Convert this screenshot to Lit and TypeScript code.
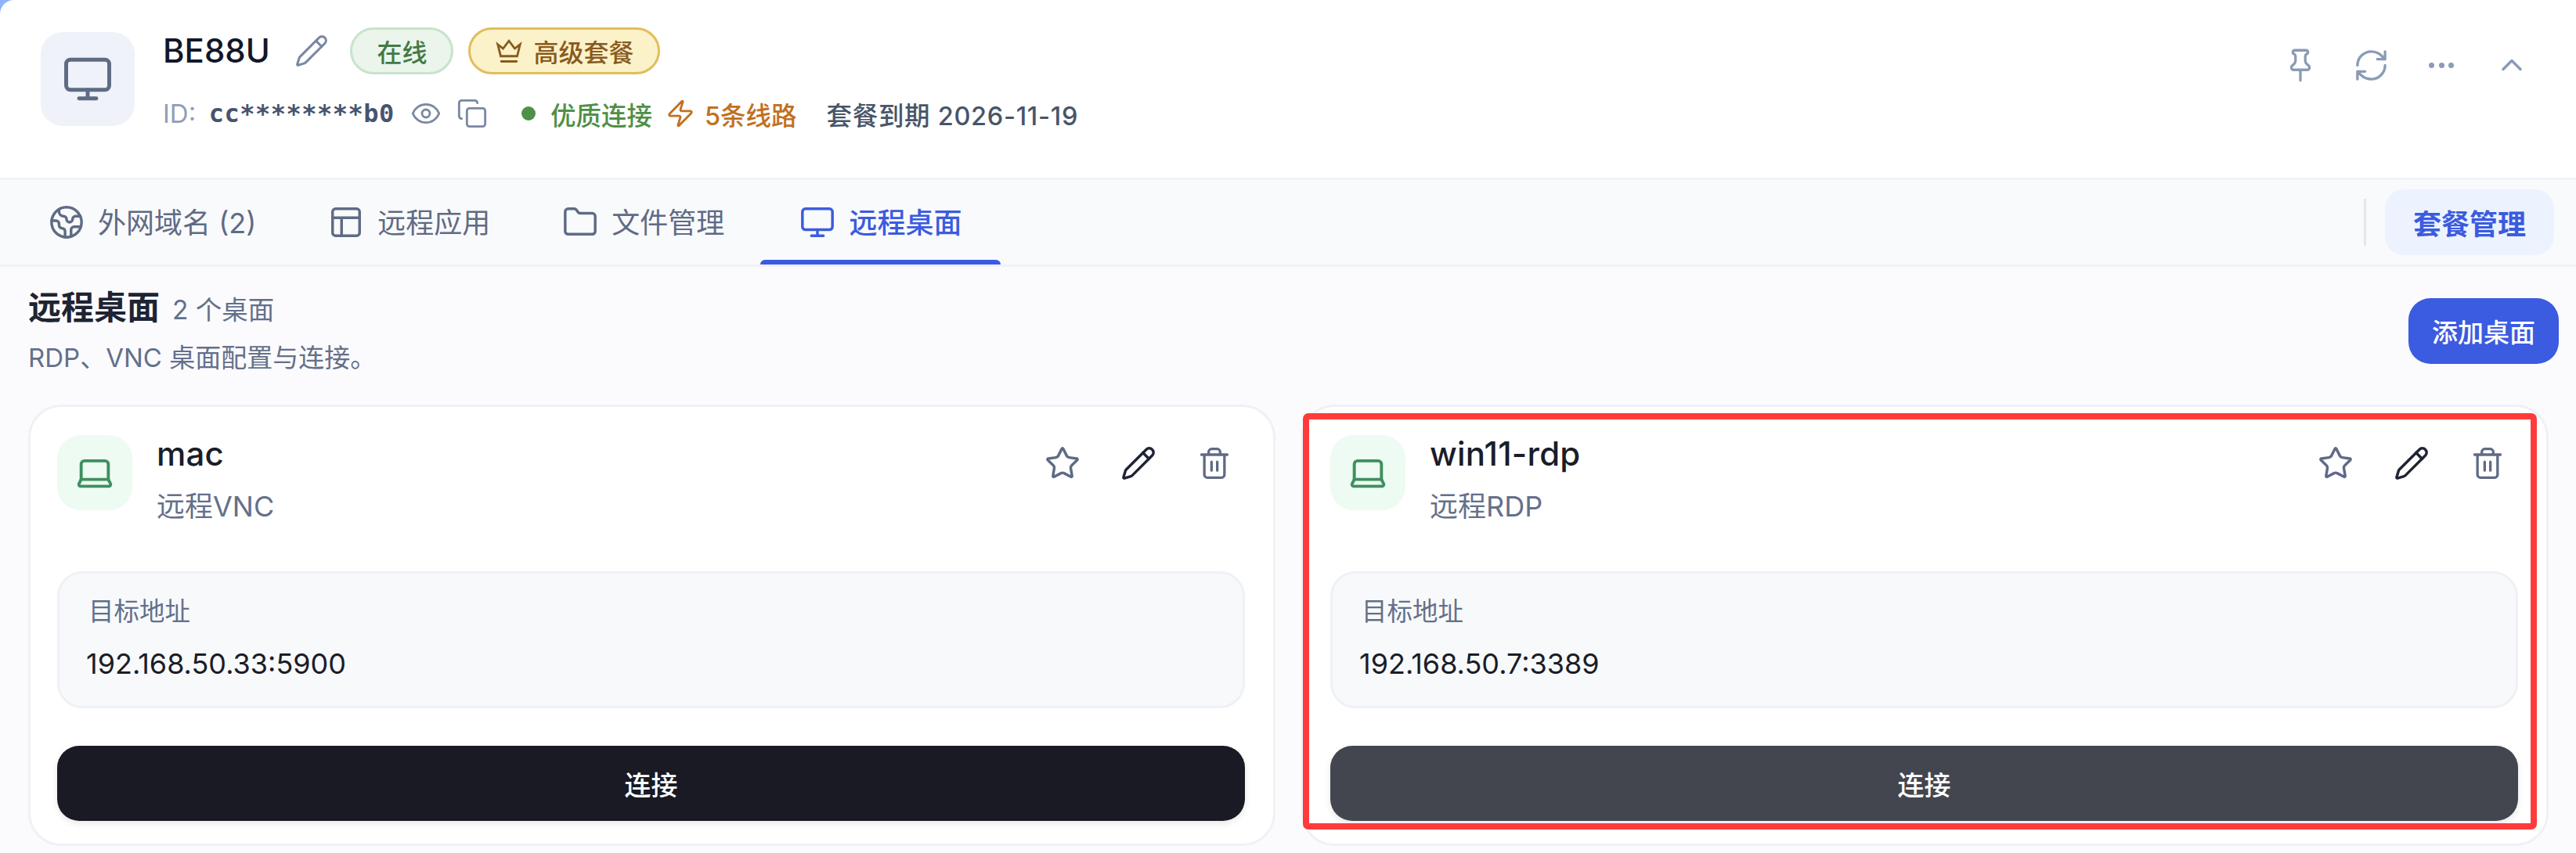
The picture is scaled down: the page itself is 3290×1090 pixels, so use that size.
import { LitElement, html, css, svg } from "lit";
import { customElement } from "lit/decorators.js";

const I = {
  monitor: svg`<rect x="2" y="3" width="20" height="14" rx="2"/><path d="M8 21h8M12 17v4"/>`,
  pencil: svg`<path d="M21.174 6.812a1 1 0 0 0-3.986-3.987L3.842 16.174a2 2 0 0 0-.5.83l-1.321 4.352a.5.5 0 0 0 .623.622l4.353-1.32a2 2 0 0 0 .83-.497z"/><path d="m15 5 4 4"/>`,
  eye: svg`<path d="M2.062 12.348a1 1 0 0 1 0-.696 10.75 10.75 0 0 1 19.876 0 1 1 0 0 1 0 .696 10.75 10.75 0 0 1-19.876 0"/><circle cx="12" cy="12" r="3"/>`,
  copy: svg`<rect x="8" y="8" width="14" height="14" rx="2"/><path d="M4 16c-1.1 0-2-.9-2-2V4c0-1.1.9-2 2-2h10c1.1 0 2 .9 2 2"/>`,
  zap: svg`<path d="M4 14a1 1 0 0 1-.78-1.63l9.9-10.2a.5.5 0 0 1 .86.46l-1.92 6.02A1 1 0 0 0 13 10h7a1 1 0 0 1 .78 1.63l-9.9 10.2a.5.5 0 0 1-.86-.46l1.92-6.02A1 1 0 0 0 11 14z"/>`,
  crown: svg`<path d="M2.5 6.5 7 10l5-6.5L17 10l4.5-3.5L19 16.5H5z"/><path d="M5.5 21h13"/>`,
  earth: svg`<path d="M21.54 15H17a2 2 0 0 0-2 2v4.54"/><path d="M7 3.34V5a3 3 0 0 0 3 3a2 2 0 0 1 2 2c0 1.1.9 2 2 2a2 2 0 0 0 2-2c0-1.1.9-2 2-2h3.17"/><path d="M11 21.95V18a2 2 0 0 0-2-2a2 2 0 0 1-2-2v-1a2 2 0 0 0-2-2H2.05"/><circle cx="12" cy="12" r="10"/>`,
  layout: svg`<rect x="3" y="3" width="18" height="18" rx="2"/><path d="M3 9h18M9 21V9"/>`,
  folder: svg`<path d="M20 20a2 2 0 0 0 2-2V8a2 2 0 0 0-2-2h-7.9a2 2 0 0 1-1.69-.9L9.6 3.9A2 2 0 0 0 7.93 3H4a2 2 0 0 0-2 2v13a2 2 0 0 0 2 2Z"/>`,
  star: svg`<path d="M11.525 2.295a.53.53 0 0 1 .95 0l2.31 4.679a2.123 2.123 0 0 0 1.595 1.16l5.166.756a.53.53 0 0 1 .294.904l-3.736 3.638a2.123 2.123 0 0 0-.611 1.878l.882 5.14a.53.53 0 0 1-.771.56l-4.618-2.428a2.122 2.122 0 0 0-1.973 0L6.396 21.01a.53.53 0 0 1-.77-.56l.881-5.139a2.122 2.122 0 0 0-.611-1.879L2.16 9.795a.53.53 0 0 1 .294-.906l5.165-.755a2.122 2.122 0 0 0 1.597-1.16z"/>`,
  trash: svg`<path d="M3 6h18M19 6v14c0 1-1 2-2 2H7c-1 0-2-1-2-2V6M8 6V4c0-1 1-2 2-2h4c1 0 2 1 2 2v2M10 11v6M14 11v6"/>`,
  laptop: svg`<path d="M18 5a2 2 0 0 1 2 2v8.526a2 2 0 0 0 .212.897l1.068 2.127a1 1 0 0 1-.9 1.45H3.62a1 1 0 0 1-.9-1.45l1.068-2.127A2 2 0 0 0 4 15.526V7a2 2 0 0 1 2-2z"/><path d="M20.054 15.987H3.946"/>`,
  pin: svg`<path d="M8.5 3h7a1.2 1.2 0 0 1 .4 2.3c-.6.3-.9.8-.9 1.4v2.8c0 1 .5 1.6 1.2 2.2l1 .9c.8.8.3 2.4-1 2.4H7.8c-1.3 0-1.8-1.6-1-2.4l1-.9c.7-.6 1.2-1.2 1.2-2.2V6.7c0-.6-.3-1.1-.9-1.4A1.2 1.2 0 0 1 8.5 3zM12 15v6.5"/>`,
  refresh: svg`<path d="M3 12a9 9 0 0 1 9-9 9.75 9.75 0 0 1 6.74 2.74L21 8M21 3v5h-5M21 12a9 9 0 0 1-9 9 9.75 9.75 0 0 1-6.74-2.74L3 16M8 16H3v5"/>`,
  chevron: svg`<path d="m6 15 6-6 6 6"/>`,
};

const icon = (p: unknown, cls: string) =>
  html`<svg class="ic ${cls}" viewBox="0 0 24 24" fill="none" stroke="currentColor" stroke-linecap="round" stroke-linejoin="round">${p}</svg>`;

const desktops = [
  { name: "mac", kind: "远程VNC", addr: "192.168.50.33:5900", hover: false },
  { name: "win11-rdp", kind: "远程RDP", addr: "192.168.50.7:3389", hover: true },
];

@customElement("app-root")
export class AppRoot extends LitElement {
  static styles = css`
    :host {
      display: block;
      position: relative;
      width: 3290px;
      height: 1090px;
      overflow: hidden;
      background: #8fb3ff;
      font-family: Inter, "Noto Sans CJK SC", sans-serif;
      color: #1a1d29;
    }
    * { box-sizing: border-box; }
    .ic { display: block; flex: none; stroke-width: 2; }

    .header {
      height: 230px;
      background: #fff;
      border-bottom: 3px solid #eff2f7;
      border-top-left-radius: 18px;
      display: flex;
      align-items: flex-start;
      padding-left: 52px;
    }
    .tile {
      width: 120px; height: 120px; margin-top: 41px;
      border-radius: 28px;
      background: #eff2f8;
      color: #5f6b85;
      display: flex; align-items: center; justify-content: center;
    }
    .ic-tile { width: 66px; height: 66px; stroke-width: 1.8; }
    .info { margin-left: 36px; padding-top: 35px; display: flex; flex-direction: column; }
    .title-row { display: flex; align-items: center; height: 60px; }
    .title { font-size: 42px; font-weight: 500; color: #12172a; line-height: 60px; }
    .ic-edit { width: 44px; height: 44px; margin-left: 31.5px; margin-right: 27px; color: #7a88a3; stroke-width: 1.7; }
    .badge {
      height: 60px; border-radius: 30px; border-width: 3px; border-style: solid;
      display: flex; align-items: center; padding: 0 31px;
      font-size: 32px; font-weight: 500; white-space: nowrap;
    }
    .online { background: #ebf5ec; border-color: #c7e4cb; color: #437a45; margin-right: 19px; }
    .plan { background: #fbf2c9; border-color: #e3bd5c; color: #8a5a1e; gap: 13px; }
    .ic-crown { width: 36px; height: 36px; stroke-width: 1.9; stroke-linejoin: miter; }
    .meta { display: flex; align-items: center; height: 40px; margin-top: 30px; white-space: nowrap; }
    .id-label { font-size: 33px; color: #919eb8; margin-right: 16.5px; }
    .mono {
      font-family: "DejaVu Sans Mono", monospace; font-weight: 700; font-size: 32px;
      letter-spacing: 0.5px; color: #475470;
    }
    .ic-eye { width: 40px; height: 40px; color: #7a88a3; margin-left: 20px; stroke-width: 1.7; }
    .ic-copy { width: 40px; height: 40px; color: #7a88a3; margin-left: 19px; stroke-width: 1.7; }
    .dot { width: 18px; height: 18px; border-radius: 50%; background: #4f9048; margin-left: 43px; margin-right: 19px; }
    .good { font-size: 32.5px; font-weight: 500; color: #4f8f46; }
    .ic-zap { width: 38px; height: 38px; color: #c2701f; margin-left: 17px; margin-right: 12px; stroke-width: 1.8; }
    .lines { font-size: 32.5px; font-weight: 500; color: #c2701f; }
    .expire { font-size: 32.5px; font-weight: 500; letter-spacing: 0.7px; color: #475569; margin-left: 38px; }

    .hd-actions { margin-left: auto; margin-right: 37px; margin-top: 38px; display: flex; color: #8a9bb5; }
    .hbtn { width: 90px; height: 90px; display: flex; align-items: center; justify-content: center; }
    .ic-pin { width: 50px; height: 50px; stroke-width: 1.6; }
    .ic-refresh { width: 47px; height: 47px; stroke-width: 1.7; }
    .dots { display: flex; gap: 5.5px; }
    .dots i { width: 7px; height: 7px; border-radius: 50%; background: #8a9bb5; display: block; }
    .ic-chev { width: 44px; height: 44px; stroke-width: 1.9; }

    .tabs {
      height: 111px;
      background: #f9fafb;
      border-bottom: 3px solid #eff2f7;
      display: flex;
      padding-left: 16px;
    }
    .tab {
      position: relative;
      display: flex; align-items: center; gap: 17px;
      padding: 0 46px 4px 46px;
      font-size: 36px; font-weight: 400; color: #5f6b85;
    }
    .tab.active { color: #3b5be0; padding: 0 50px 4px 50px; font-weight: 500; }
    .tab.active::after {
      content: ""; position: absolute; left: 0; right: 0; bottom: 0; height: 6px;
      background: #3b5be0; border-radius: 6px 6px 0 0;
    }
    .ic-tab { width: 46px; height: 46px; stroke-width: 1.8; margin-top: 3px; }
    .tabs-right { margin-left: auto; margin-right: 28px; display: flex; align-items: center; }
    .divider { width: 3px; height: 60px; background: #e2e7ef; margin-right: 24px; }
    .manage {
      width: 216px; height: 84px; border-radius: 24px; background: #edf3fe; color: #3b5be0;
      font-size: 36px; font-weight: 600;
      display: flex; align-items: center; justify-content: center;
    }

    .content { height: 749px; background: #fbfbfd; display: flex; flex-direction: column; }
    .sec-head {
      height: 176px; padding: 28px 22px 0 36px;
      display: flex; align-items: flex-start; justify-content: space-between;
    }
    .sec-title { display: flex; align-items: baseline; gap: 16px; line-height: 48px; }
    .sec-title b { font-size: 42px; font-weight: 700; color: #1e2433; }
    .sec-title span { font-size: 33.5px; color: #64708a; }
    .sec-sub { font-size: 33px; line-height: 44px; margin-top: 15px; color: #64708a; }
    .add {
      width: 192px; height: 84px; margin-top: 12px; border-radius: 28px;
      background: #3b5be0; color: #fff; font-size: 33px; font-weight: 500;
      display: flex; align-items: center; justify-content: center;
    }

    .cards { display: grid; grid-template-columns: 1593px 1593px; gap: 33px; padding-left: 36px; }
    .card {
      height: 564px; background: #fff; border: 3px solid #eef1f6; border-radius: 42px;
      padding: 36px 36px 29px 34px;
      display: flex; flex-direction: column;
    }
    .card-head { height: 174px; display: flex; align-items: flex-start; }
    .ctile {
      width: 96px; height: 96px; border-radius: 30px; background: #edfbf2; color: #3f8f5f;
      display: flex; align-items: center; justify-content: center;
    }
    .ic-laptop { width: 52px; height: 52px; stroke-width: 1.8; }
    .names { margin-left: 31px; }
    .name { font-size: 42px; font-weight: 500; line-height: 48px; letter-spacing: 0.2px; color: #1a1d29; }
    .kind { font-size: 36px; line-height: 46px; margin-top: 20px; color: #64708a; }
    .actions { margin-left: auto; margin-right: 7px; margin-top: 4px; display: flex; gap: 33px; }
    .abtn { width: 64px; height: 64px; display: flex; align-items: center; justify-content: center; color: #5f6b85; }
    .abtn.dark { color: #1e2433; }
    .ic-act { width: 46px; height: 46px; stroke-width: 1.8; }
    .ic-act2 { width: 44px; height: 44px; stroke-width: 1.8; }
    .box {
      height: 175px; background: #f8f9fb; border: 3px solid #eef1f6; border-radius: 32px;
      padding: 27px 35px 0 37px;
    }
    .label { font-size: 32.5px; line-height: 44px; color: #64708a; }
    .addr { font-size: 36px; line-height: 44px; margin-top: 22px; margin-left: -3px; color: #1a1d29; }
    .connect {
      height: 96px; margin-top: 48px; border-radius: 28px; background: #191a23; color: #fff;
      font-size: 34px; font-weight: 500;
      box-shadow: 0 3px 8px rgba(15, 20, 35, 0.1);
      display: flex; align-items: center; justify-content: center;
    }
    .connect.hover { background: #43464f; }

    .mark {
      position: absolute; left: 1664px; top: 528px; width: 1576px; height: 532px;
      border: 8px solid #ff3b3b; border-radius: 7px; pointer-events: none;
    }
  `;

  render() {
    return html`
      <div class="header">
        <div class="tile">${icon(I.monitor, "ic-tile")}</div>
        <div class="info">
          <div class="title-row">
            <span class="title">BE88U</span>
            ${icon(I.pencil, "ic-edit")}
            <span class="badge online">在线</span>
            <span class="badge plan">${icon(I.crown, "ic-crown")}高级套餐</span>
          </div>
          <div class="meta">
            <span class="id-label">ID:</span>
            <span class="mono">cc********b0</span>
            ${icon(I.eye, "ic-eye")}
            ${icon(I.copy, "ic-copy")}
            <span class="dot"></span>
            <span class="good">优质连接</span>
            ${icon(I.zap, "ic-zap")}
            <span class="lines">5条线路</span>
            <span class="expire">套餐到期 2026-11-19</span>
          </div>
        </div>
        <div class="hd-actions">
          <div class="hbtn">${icon(I.pin, "ic-pin")}</div>
          <div class="hbtn">${icon(I.refresh, "ic-refresh")}</div>
          <div class="hbtn"><div class="dots"><i></i><i></i><i></i></div></div>
          <div class="hbtn">${icon(I.chevron, "ic-chev")}</div>
        </div>
      </div>
      <div class="tabs">
        <div class="tab">${icon(I.earth, "ic-tab")}外网域名 (2)</div>
        <div class="tab">${icon(I.layout, "ic-tab")}远程应用</div>
        <div class="tab">${icon(I.folder, "ic-tab")}文件管理</div>
        <div class="tab active">${icon(I.monitor, "ic-tab")}远程桌面</div>
        <div class="tabs-right">
          <div class="divider"></div>
          <div class="manage">套餐管理</div>
        </div>
      </div>
      <div class="content">
        <div class="sec-head">
          <div>
            <div class="sec-title"><b>远程桌面</b><span>2 个桌面</span></div>
            <div class="sec-sub">RDP、VNC 桌面配置与连接。</div>
          </div>
          <div class="add">添加桌面</div>
        </div>
        <div class="cards">
          ${desktops.map(
            (d) => html`
              <div class="card">
                <div class="card-head">
                  <div class="ctile">${icon(I.laptop, "ic-laptop")}</div>
                  <div class="names">
                    <div class="name">${d.name}</div>
                    <div class="kind">${d.kind}</div>
                  </div>
                  <div class="actions">
                    <div class="abtn">${icon(I.star, "ic-act")}</div>
                    <div class="abtn dark">${icon(I.pencil, "ic-act")}</div>
                    <div class="abtn">${icon(I.trash, "ic-act2")}</div>
                  </div>
                </div>
                <div class="box">
                  <div class="label">目标地址</div>
                  <div class="addr">${d.addr}</div>
                </div>
                <div class="connect ${d.hover ? "hover" : ""}">连接</div>
              </div>
            `
          )}
        </div>
      </div>
      <div class="mark"></div>
    `;
  }
}
